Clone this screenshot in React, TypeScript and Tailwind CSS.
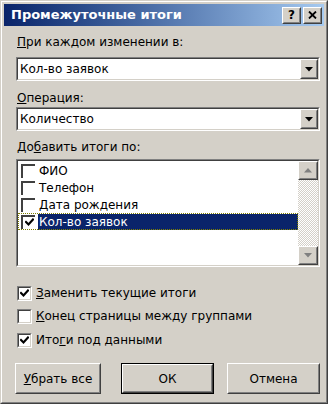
import React from 'react';

const FONT = "font-['DejaVu_Sans','Liberation_Sans',sans-serif]";

interface BoxProps {
  className?: string;
  children?: React.ReactNode;
}

// sunken 3D frame used by combos, list and checkboxes
function Sunken({ className = '', children }: BoxProps) {
  return (
    <div className={`border border-t-[#808080] border-l-[#808080] border-b-white border-r-white ${className}`}>
      <div className="h-full w-full border border-t-[#404040] border-l-[#404040] border-b-[#d4d0c8] border-r-[#d4d0c8] bg-white">
        {children}
      </div>
    </div>
  );
}

function Raised({ className = '', children }: BoxProps) {
  return (
    <div className={`border border-t-white border-l-white border-b-[#404040] border-r-[#404040] bg-[#d4d0c8] ${className}`}>
      <div className="h-full w-full border border-t-[#d4d0c8] border-l-[#d4d0c8] border-b-[#808080] border-r-[#808080] flex items-center justify-center">
        {children}
      </div>
    </div>
  );
}

function Check() {
  return (
    <svg width="9" height="9" viewBox="0 0 9 9" className="block">
      <path d="M1 4 L3.5 6.5 L8 1.5" fill="none" stroke="#000" strokeWidth="2.2" strokeLinecap="square" />
    </svg>
  );
}

function ArrowDown() {
  return (
    <svg width="8" height="5" viewBox="0 0 8 5" className="block">
      <path d="M0 0 H8 L4 4.5 Z" fill="#000" />
    </svg>
  );
}

function Combo({ value }: { value: string }) {
  return (
    <Sunken className="h-[24px]">
      <div className="flex h-full">
        <div className="flex-1 pl-[2px] text-[12px] leading-[20px]">{value}</div>
        <Raised className="w-[18px] h-full">
          <ArrowDown />
        </Raised>
      </div>
    </Sunken>
  );
}

function ListItem({ label, checked, selected }: { label: string; checked?: boolean; selected?: boolean }) {
  return (
    <div className={`flex items-center h-[17px] pl-[3px] ${selected ? 'outline outline-1 outline-dotted outline-[#808000] -outline-offset-1' : ''}`}>
      <div className="w-[14px] h-[14px] border-t-2 border-l-2 border-t-[#404040] border-l-[#404040] bg-white flex items-center justify-center">
        {checked && <Check />}
      </div>
      <span className={`flex-1 ml-[3px] pl-[1px] h-[16px] leading-[16px] text-[12px] ${selected ? 'bg-[#0a246a] text-white' : ''}`}>
        {label}
      </span>
    </div>
  );
}

function CheckRow({ checked, children }: { checked?: boolean; children: React.ReactNode }) {
  return (
    <div className="flex items-center h-[16px] pl-[1px]">
      <Sunken className="w-[15px] h-[15px]">
        <div className="flex h-full items-center justify-center">{checked && <Check />}</div>
      </Sunken>
      <span className="ml-[4px] text-[12px] leading-[16px]">{children}</span>
    </div>
  );
}

export default function App() {
  return (
    <div className={`w-[332px] h-[405px] bg-white text-black ${FONT}`}>
      <div className="w-[328px] h-[404px] border border-t-[#d4d0c8] border-l-[#d4d0c8] border-b-[#404040] border-r-[#404040]">
        <div className="h-full border border-t-white border-l-white border-b-[#808080] border-r-[#808080] bg-[#d4d0c8] p-[2px] flex flex-col">
          {/* title bar */}
          <div className="h-[22px] bg-gradient-to-r from-[#0a246a] to-[#a6caf0] flex items-center justify-between pl-[7px] pr-[2px]">
            <span className="text-white font-bold text-[13px] leading-[22px]">Промежуточные итоги</span>
            <div className="flex gap-[2px]">
              <Raised className="w-[19px] h-[17px]">
                <span className="font-bold text-[12px] leading-none">?</span>
              </Raised>
              <Raised className="w-[19px] h-[17px]">
                <svg width="9" height="8" viewBox="0 0 9 8" className="block">
                  <path d="M1 0.5 L8 7.5 M8 0.5 L1 7.5" stroke="#000" strokeWidth="1.8" />
                </svg>
              </Raised>
            </div>
          </div>

          <div className="flex flex-col pl-[12px] pr-[4px]">
            <div className="mt-[9px] pl-[1px] h-[14px] text-[12px] leading-[14px]">
              <u>П</u>ри каждом изменении в:
            </div>
            <div className="mt-[8px]">
              <Combo value="Кол-во заявок" />
            </div>
            <div className="mt-[10px] pl-[1px] h-[14px] text-[12px] leading-[14px]">
              <u>О</u>перация:
            </div>
            <div className="mt-[2px]">
              <Combo value="Количество" />
            </div>
            <div className="mt-[9px] pl-[1px] h-[14px] text-[12px] leading-[14px]">
              До<u>б</u>авить итоги по:
            </div>

            <Sunken className="mt-[5px] h-[108px]">
              <div className="flex h-full">
                <div className="flex-1 pt-[1px]">
                  <ListItem label="ФИО" />
                  <ListItem label="Телефон" />
                  <ListItem label="Дата рождения" />
                  <ListItem label="Кол-во заявок" checked selected />
                </div>
                <div className="w-[20px] flex flex-col bg-[repeating-conic-gradient(#ffffff_0_25%,#d4d0c8_0_50%)] bg-[length:2px_2px]">
                  <Raised className="h-[19px]">
                    <svg width="8" height="5" viewBox="0 0 8 5" className="block">
                      <path d="M0 4.5 H8 L4 0 Z" fill="#808080" />
                    </svg>
                  </Raised>
                  <div className="flex-1" />
                  <Raised className="h-[19px]">
                    <svg width="8" height="5" viewBox="0 0 8 5" className="block">
                      <path d="M0 0 H8 L4 4.5 Z" fill="#808080" />
                    </svg>
                  </Raised>
                </div>
              </div>
            </Sunken>

            <div className="mt-[18px] flex flex-col gap-[7px]">
              <CheckRow checked>
                <u>З</u>аменить текущие итоги
              </CheckRow>
              <CheckRow>
                <u>К</u>онец страницы между группами
              </CheckRow>
              <div className="mt-[1px]">
                <CheckRow checked>
                  Ито<u>г</u>и под данными
                </CheckRow>
              </div>
            </div>

            <div className="mt-[15px] flex text-[12px]">
              <Raised className="w-[86px] h-[31px] -ml-[1px]">
                <span>
                  <u>У</u>брать все
                </span>
              </Raised>
              <div className="ml-[20px] w-[93px] h-[31px] border border-black">
                <Raised className="h-full">
                  <span>ОК</span>
                </Raised>
              </div>
              <Raised className="ml-[13px] w-[93px] h-[31px]">
                <span>Отмена</span>
              </Raised>
            </div>
          </div>
        </div>
      </div>
    </div>
  );
}
